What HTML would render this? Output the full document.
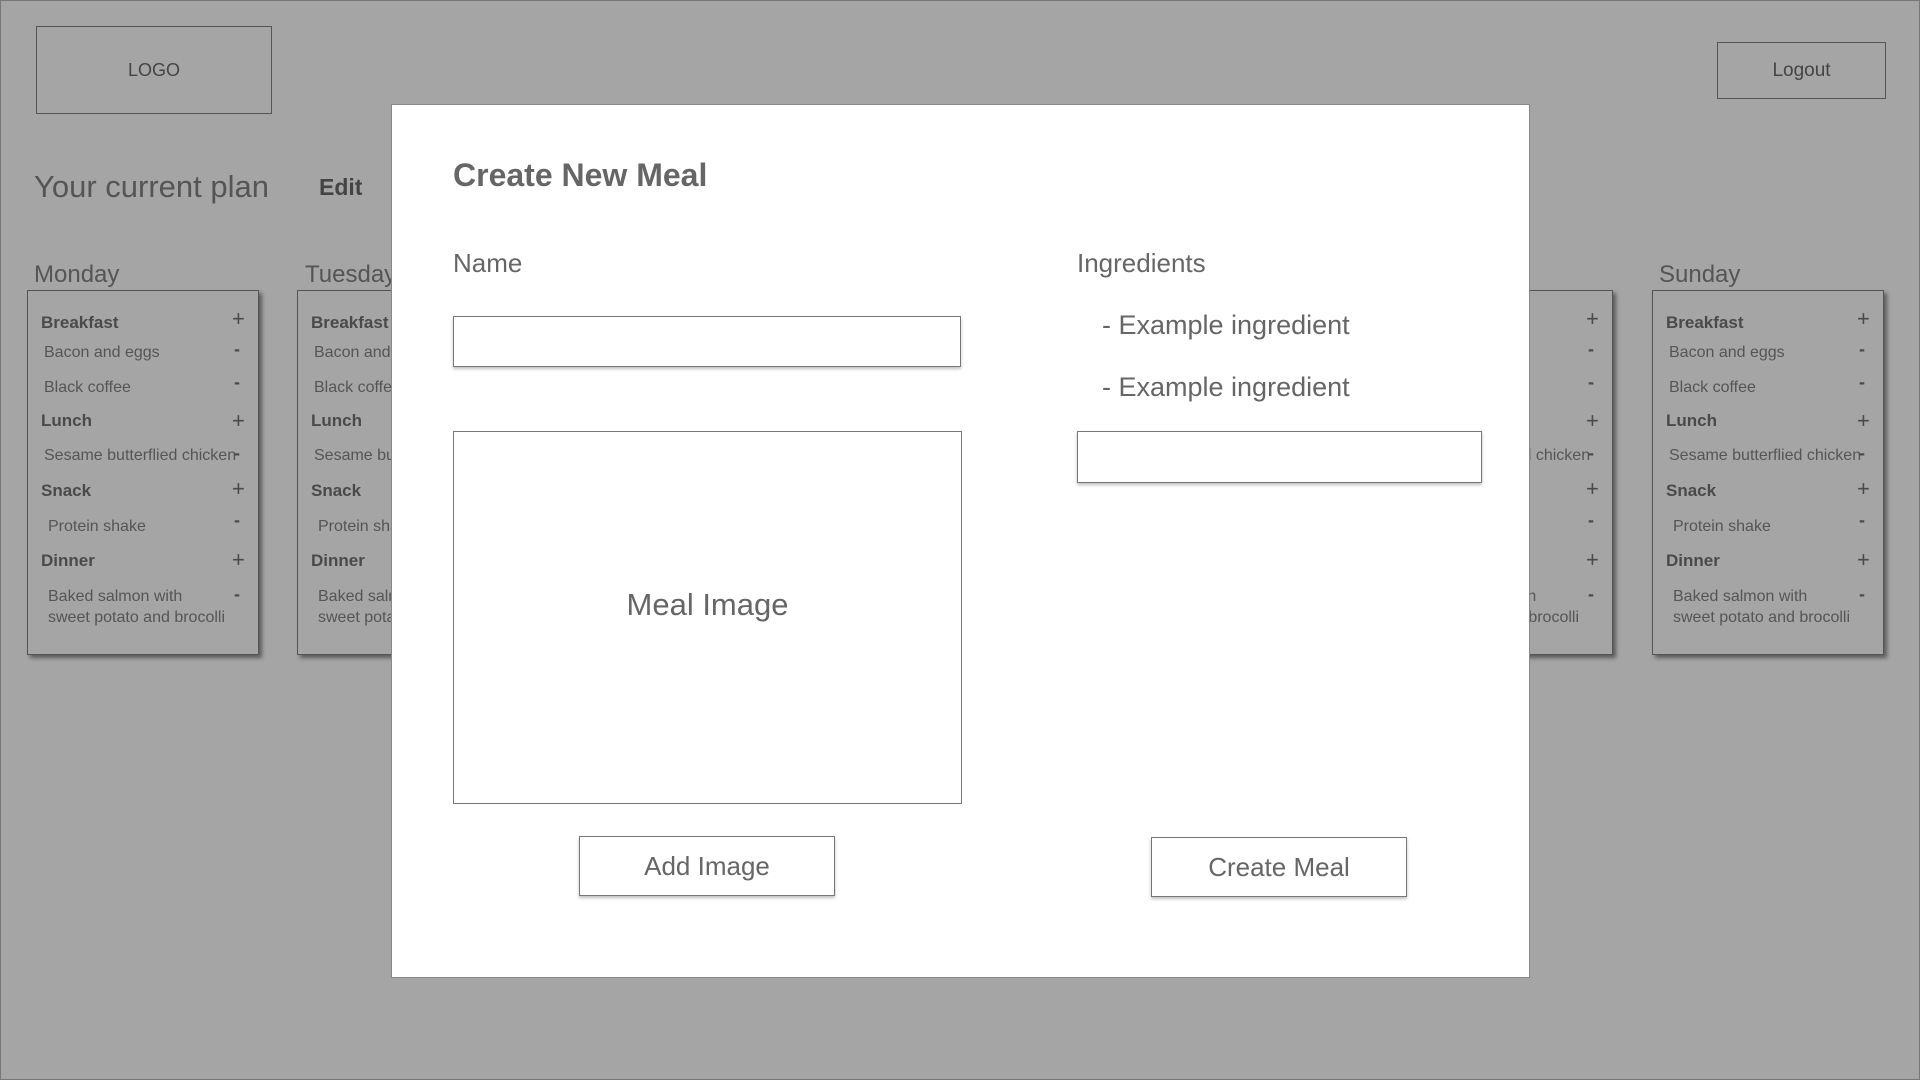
<!DOCTYPE html>
<html><head><meta charset="utf-8"><style>
*{margin:0;padding:0;box-sizing:border-box}
body{width:1920px;height:1080px;background:#a5a5a5;font-family:"Liberation Sans","DejaVu Sans",sans-serif;position:relative;overflow:hidden;border:1px solid #777}
.a{position:absolute;white-space:nowrap}
.box{position:absolute;border:1px solid #555}
.card{position:absolute;top:289px;width:232px;height:365px;border:1.5px solid #555;box-shadow:3px 3px 4px rgba(0,0,0,.45);color:#4a4a4a}
.card .h{position:absolute;left:13px;font-weight:bold;font-size:17px}
.card .i{position:absolute;font-size:16px;color:#555;line-height:21px;white-space:nowrap}
.card .p{position:absolute;left:204px;font-size:22px;line-height:20px}
.card .m{position:absolute;left:206px;font-size:18px;line-height:18px;font-weight:bold}
.day{position:absolute;top:260px;font-size:24px;color:#555}
.modal{position:absolute;left:390px;top:103px;width:1139px;height:874px;background:#fff;border:1px solid #888;color:#666}
.inp{position:absolute;border:1px solid #777;background:#fff;box-shadow:0 2px 3px rgba(0,0,0,.25)}
.btn{position:absolute;border:1px solid #777;background:#fff;box-shadow:0 2px 3px rgba(0,0,0,.25);font-size:26px;color:#666;text-align:center}
</style></head><body>
<div class="box" style="left:35px;top:25px;width:236px;height:88px;color:#444;font-size:18px;text-align:center;line-height:86px">LOGO</div>
<div class="box" style="left:1716px;top:41px;width:169px;height:57px;color:#444;font-size:19px;text-align:center;line-height:55px">Logout</div>
<div class="a" style="left:33px;top:168px;font-size:31px;color:#555">Your current plan</div>
<div class="a" style="left:318px;top:173px;font-size:23px;font-weight:bold;color:#444">Edit</div>

<div class="day" style="left:33px">Monday</div>
<div class="day" style="left:304px">Tuesday</div>
<div class="day" style="left:1658px">Sunday</div>

<div class="card" style="left:26px">
<div class="h" style="top:22px">Breakfast</div><div class="p" style="top:18px">+</div>
<div class="i" style="left:16px;top:51px">Bacon and eggs</div><div class="m" style="top:49px">-</div>
<div class="i" style="left:16px;top:86px">Black coffee</div><div class="m" style="top:82px">-</div>
<div class="h" style="top:120px">Lunch</div><div class="p" style="top:120px">+</div>
<div class="i" style="left:16px;top:154px">Sesame butterflied chicken</div><div class="m" style="top:153px">-</div>
<div class="h" style="top:190px">Snack</div><div class="p" style="top:188px">+</div>
<div class="i" style="left:20px;top:225px">Protein shake</div><div class="m" style="top:220px">-</div>
<div class="h" style="top:260px">Dinner</div><div class="p" style="top:259px">+</div>
<div class="i" style="left:20px;top:295px">Baked salmon with<br>sweet potato and brocolli</div><div class="m" style="top:294px">-</div>
</div>
<div class="card" style="left:296px">
<div class="h" style="top:22px">Breakfast</div><div class="p" style="top:18px">+</div>
<div class="i" style="left:16px;top:51px">Bacon and eggs</div><div class="m" style="top:49px">-</div>
<div class="i" style="left:16px;top:86px">Black coffee</div><div class="m" style="top:82px">-</div>
<div class="h" style="top:120px">Lunch</div><div class="p" style="top:120px">+</div>
<div class="i" style="left:16px;top:154px">Sesame butterflied chicken</div><div class="m" style="top:153px">-</div>
<div class="h" style="top:190px">Snack</div><div class="p" style="top:188px">+</div>
<div class="i" style="left:20px;top:225px">Protein shake</div><div class="m" style="top:220px">-</div>
<div class="h" style="top:260px">Dinner</div><div class="p" style="top:259px">+</div>
<div class="i" style="left:20px;top:295px">Baked salmon with<br>sweet potato and brocolli</div><div class="m" style="top:294px">-</div>
</div>
<div class="card" style="left:1380px">
<div class="h" style="top:22px">Breakfast</div><div class="p" style="top:18px">+</div>
<div class="i" style="left:16px;top:51px">Bacon and eggs</div><div class="m" style="top:49px">-</div>
<div class="i" style="left:16px;top:86px">Black coffee</div><div class="m" style="top:82px">-</div>
<div class="h" style="top:120px">Lunch</div><div class="p" style="top:120px">+</div>
<div class="i" style="left:16px;top:154px">Sesame butterflied chicken</div><div class="m" style="top:153px">-</div>
<div class="h" style="top:190px">Snack</div><div class="p" style="top:188px">+</div>
<div class="i" style="left:20px;top:225px">Protein shake</div><div class="m" style="top:220px">-</div>
<div class="h" style="top:260px">Dinner</div><div class="p" style="top:259px">+</div>
<div class="i" style="left:20px;top:295px">Baked salmon with<br>sweet potato and brocolli</div><div class="m" style="top:294px">-</div>
</div>
<div class="card" style="left:1651px">
<div class="h" style="top:22px">Breakfast</div><div class="p" style="top:18px">+</div>
<div class="i" style="left:16px;top:51px">Bacon and eggs</div><div class="m" style="top:49px">-</div>
<div class="i" style="left:16px;top:86px">Black coffee</div><div class="m" style="top:82px">-</div>
<div class="h" style="top:120px">Lunch</div><div class="p" style="top:120px">+</div>
<div class="i" style="left:16px;top:154px">Sesame butterflied chicken</div><div class="m" style="top:153px">-</div>
<div class="h" style="top:190px">Snack</div><div class="p" style="top:188px">+</div>
<div class="i" style="left:20px;top:225px">Protein shake</div><div class="m" style="top:220px">-</div>
<div class="h" style="top:260px">Dinner</div><div class="p" style="top:259px">+</div>
<div class="i" style="left:20px;top:295px">Baked salmon with<br>sweet potato and brocolli</div><div class="m" style="top:294px">-</div>
</div>

<div class="modal">
<div class="a" style="left:61px;top:52px;font-size:32px;font-weight:bold">Create New Meal</div>
<div class="a" style="left:61px;top:143px;font-size:26px">Name</div>
<div class="inp" style="left:61px;top:211px;width:508px;height:51px"></div>
<div class="a" style="left:61px;top:326px;width:509px;height:373px;border:1px solid #777;text-align:center;line-height:346px;font-size:31px">Meal Image</div>
<div class="btn" style="left:187px;top:731px;width:256px;height:60px;line-height:58px">Add Image</div>
<div class="a" style="left:685px;top:143px;font-size:26px">Ingredients</div>
<div class="a" style="left:710px;top:205px;font-size:27px">- Example ingredient</div>
<div class="a" style="left:710px;top:267px;font-size:27px">- Example ingredient</div>
<div class="inp" style="left:685px;top:326px;width:405px;height:52px"></div>
<div class="btn" style="left:759px;top:732px;width:256px;height:60px;line-height:58px">Create Meal</div>
</div>
</body></html>
